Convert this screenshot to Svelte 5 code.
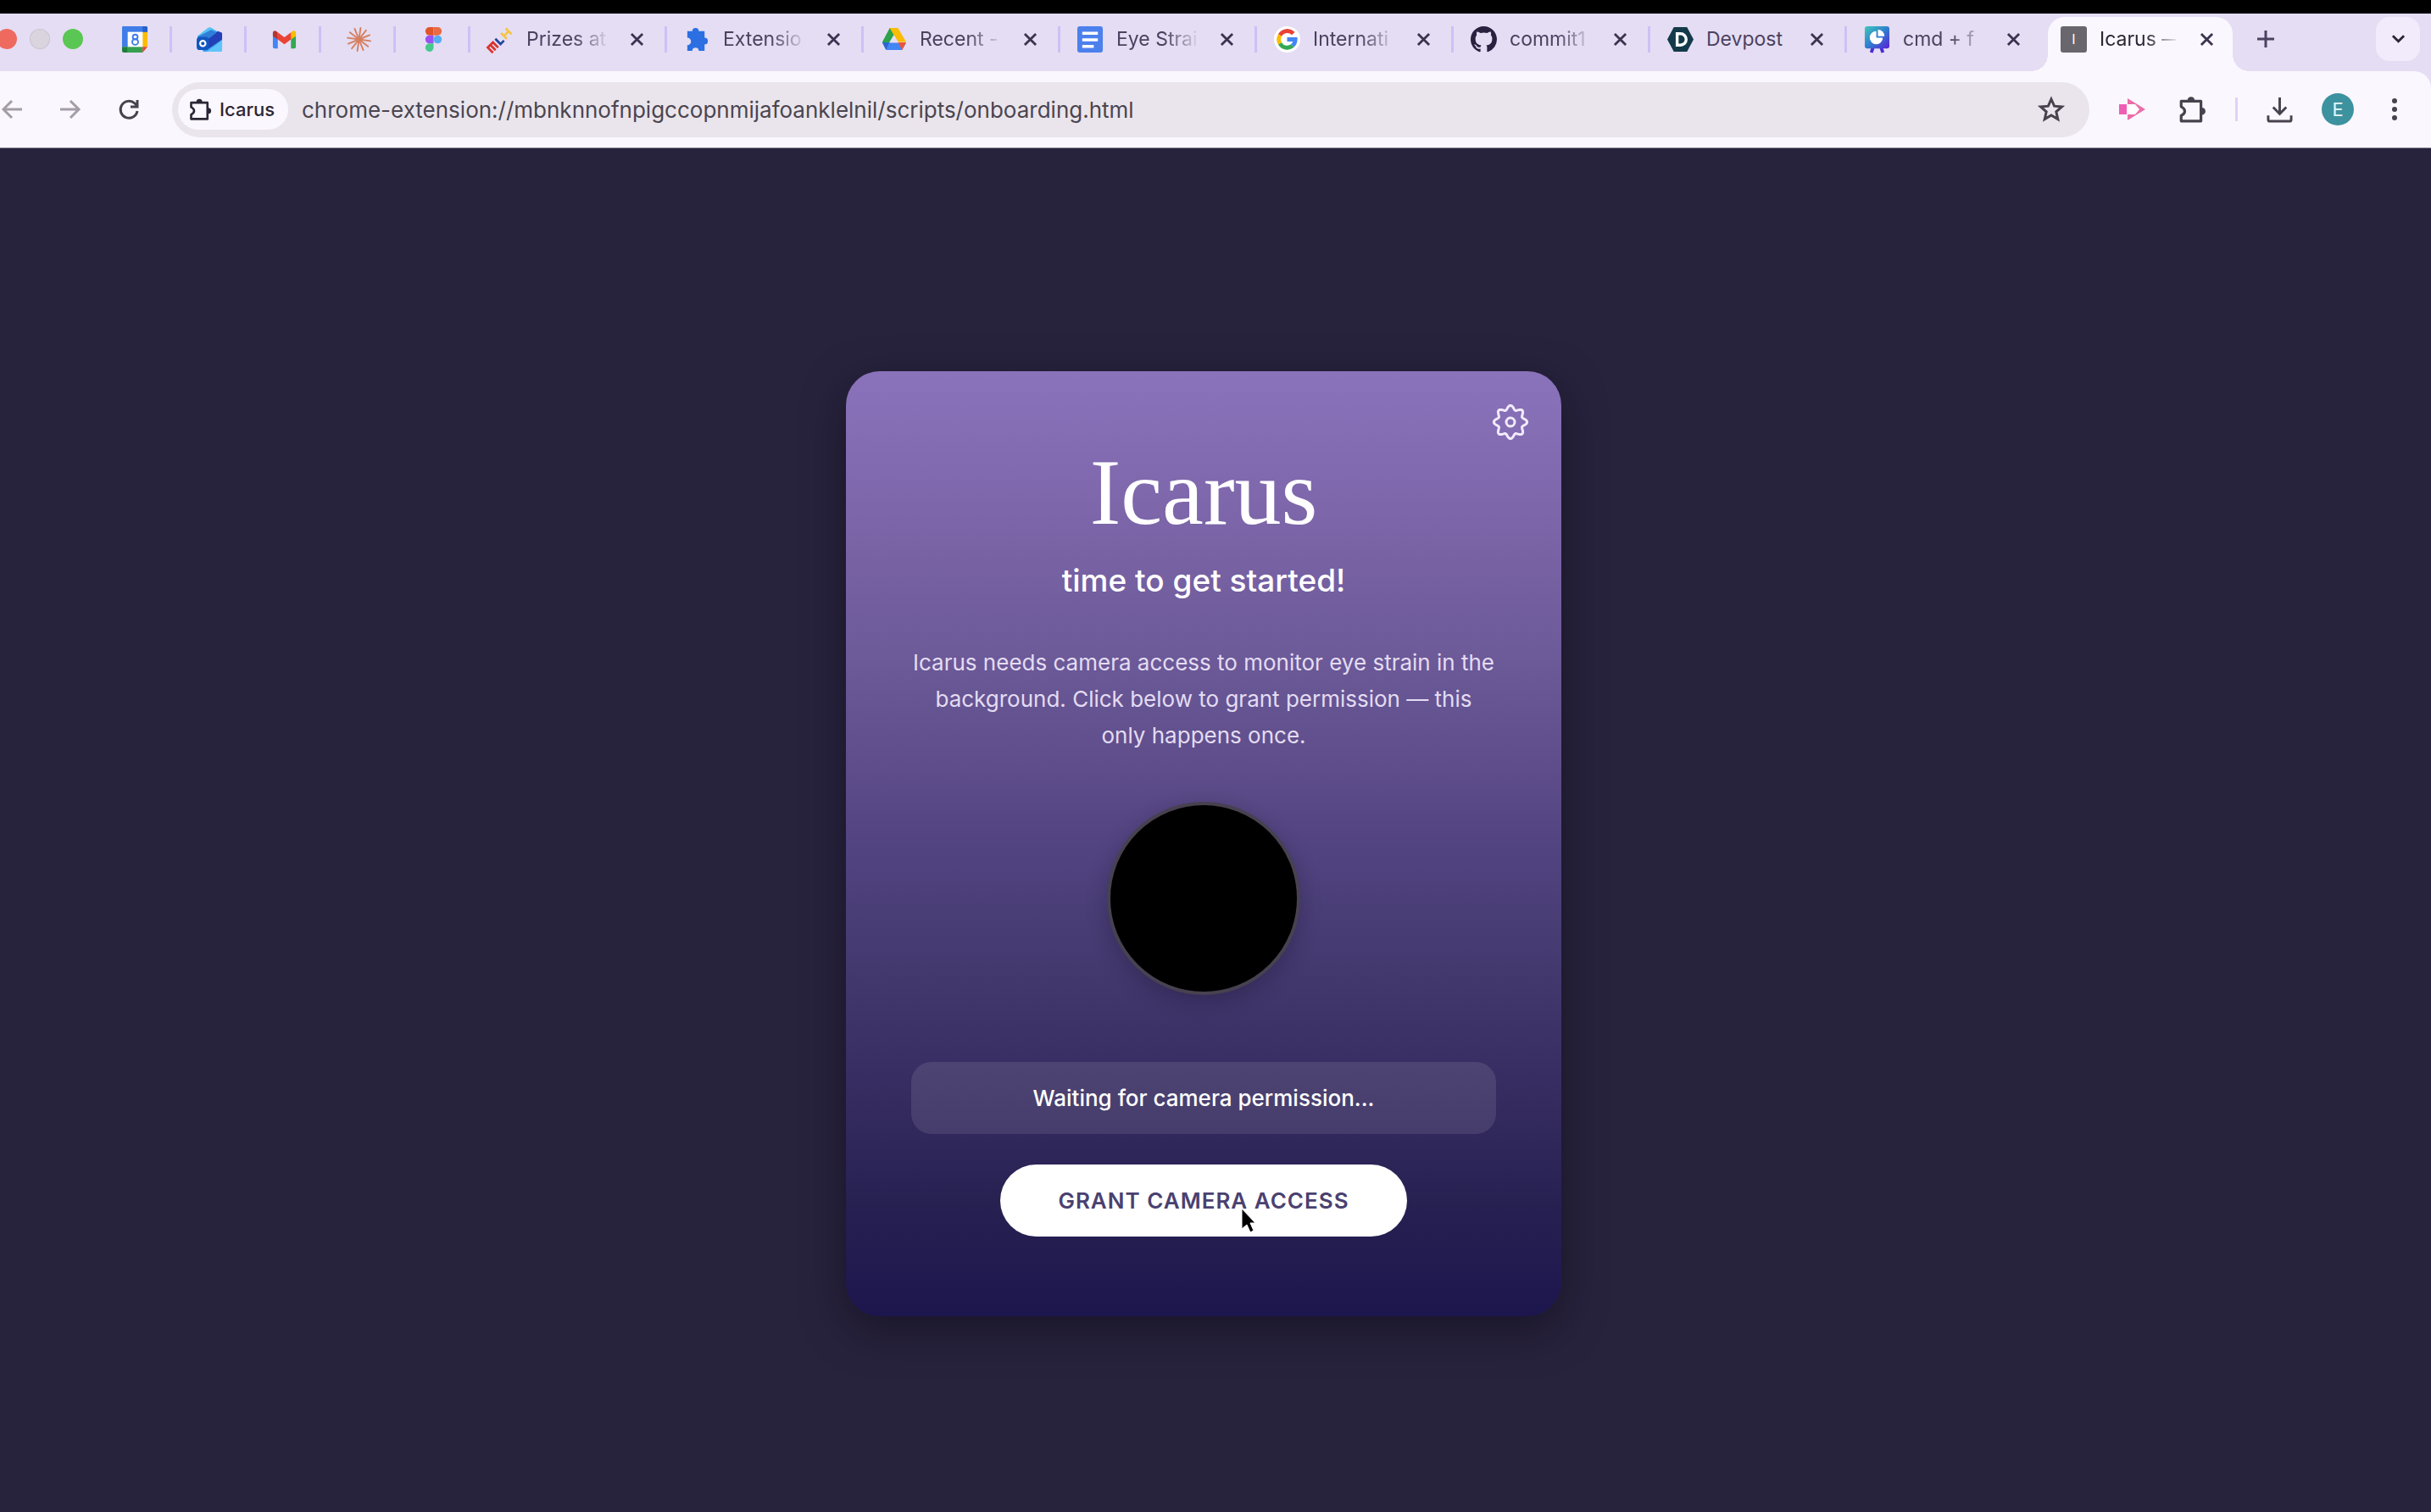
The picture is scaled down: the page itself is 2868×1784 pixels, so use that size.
<script>
  const pinned = ['calendar', 'outlook', 'gmail', 'claude', 'figma'];
  const tabs = [
    { icon: 'mlh', title: 'Prizes at', fade: true },
    { icon: 'ext', title: 'Extensio', fade: true },
    { icon: 'drive', title: 'Recent -', fade: true },
    { icon: 'docs', title: 'Eye Strai', fade: true },
    { icon: 'google', title: 'Internati', fade: true },
    { icon: 'github', title: 'commit1', fade: true },
    { icon: 'devpost', title: 'Devpost', fade: false },
    { icon: 'deck', title: 'cmd + f', fade: true }
  ];
  const rays = Array.from({ length: 12 }, (_, i) => i * 30 + 8);

  // Eight rounded lobes around a circle.
  const gearPoints = Array.from({ length: 192 }, (_, i) => {
    const t = (i / 192) * Math.PI * 2;
    const r = 17.2 + 2.4 * Math.cos(8 * t);
    return `${(21 + r * Math.cos(t)).toFixed(2)},${(21 + r * Math.sin(t)).toFixed(2)}`;
  }).join(' ');
</script>

{#snippet favicon(name)}
  <svg class="fav" viewBox="0 0 32 32" aria-hidden="true">
    {#if name === 'calendar'}
      <path d="M3 0h26a2 2 0 0 1 2 2v5H7v18H0V2a2 2 0 0 1 3-2z" fill="#3f7de8" />
      <path d="M25 7h6v18h-6z" fill="#fbbc04" />
      <path d="M25 0h4a2 2 0 0 1 2 2v5h-6z" fill="#2a5fcb" />
      <path d="M7 25h18v7H7z" fill="#34a04f" />
      <path d="M0 25h7v7H2a2 2 0 0 1-2-2z" fill="#1e7e3c" />
      <path d="M25 25h6l-6 7z" fill="#ea4335" />
      <path d="M7 7h18v18H7z" fill="#fff" />
      <circle cx="16" cy="13" r="3" fill="none" stroke="#3f7de8" stroke-width="2" />
      <circle cx="16" cy="19" r="3.6" fill="none" stroke="#3f7de8" stroke-width="2" />
    {:else if name === 'outlook'}
      <path d="M1 12 14 2q2-1 4 0l13 8v18a3 3 0 0 1-3 3H8z" fill="#3aa0ee" />
      <path d="M1 12 14 2q2-1 4 0l4 3L6 16z" fill="#55c3f5" />
      <path d="M31 8v8L12 29l-4-11L26 6z" fill="#2340b8" />
      <path d="M1 13 18 4l6 4L8 20z" fill="#2f7fd8" />
      <path d="M12 31 31 17v11a3 3 0 0 1-3 3z" fill="#5fc4fb" />
      <rect x="0" y="13" width="15" height="16" rx="4" fill="#1257c0" />
      <circle cx="7.500" cy="21" r="3.300" fill="none" stroke="#fff" stroke-width="2.200" />
    {:else if name === 'gmail'}
      <path d="M2 8v17a2 2 0 0 0 2 2h4V13z" fill="#4285f4" />
      <path d="M30 8v17a2 2 0 0 1-2 2h-4V13z" fill="#34a853" />
      <path d="M24 7.500 26 6c2-1.500 4 0 4 2v4l-6 4z" fill="#fbbc04" />
      <path d="M8 7.500 6 6C4 4.500 2 6 2 8v4l6 4z" fill="#b8352b" />
      <path d="M8 7.500 16 13.500 24 7.500V16l-8 6-8-6z" fill="#ea4335" />
    {:else if name === 'claude'}
      {#each rays as a}
        <path d="M16 16V2" stroke="#d5805f" stroke-width="2" stroke-linecap="round" transform="rotate({a} 16 16)" />
      {/each}
    {:else if name === 'figma'}
      <path d="M11 1h5v10h-5a5 5 0 0 1 0-10z" fill="#e0542a" />
      <path d="M16 1h5a5 5 0 0 1 0 10h-5z" fill="#e96a45" />
      <path d="M11 11h5v10h-5a5 5 0 0 1 0-10z" fill="#9a52f4" />
      <circle cx="21" cy="16" r="5" fill="#55aef0" />
      <path d="M11 21h5v5a5 5 0 1 1-5-5z" fill="#45c98c" />
    {:else if name === 'mlh'}
      <g fill="none" stroke-width="2.800" transform="rotate(-45 16 16)">
        <path d="M-2 21v-9h9v9M2.500 12v9" stroke="#d8342c" />
        <path d="M12 11v9h6" stroke="#24439c" />
        <path d="M22 11v10M30 11v10M22 16h8" stroke="#f5c542" />
      </g>
    {:else if name === 'ext'}
      <path d="M3 7h6a4 4 0 1 1 8 0h7v8a4 4 0 1 1 0 8v8h-7a4 4 0 0 0-8 0H3v-7a4 4 0 0 0 0-9z" fill="#2b6fe3" transform="translate(1 -1)" />
    {:else if name === 'drive'}
      <path d="M11 2h10L7 27 2 19z" fill="#2ba24c" />
      <path d="M11 2h10l10 17H21z" fill="#fbbc04" />
      <path d="M7 20h24l-5 9H7l-5-9z" fill="#4285f4" />
      <path d="M21 19.500h10L26 29z" fill="#ea5540" />
      <path d="M16 10.500 21.500 19.500h-11z" fill="#e6def4" />
      <path d="M2 19.500h8.500L6.500 29z" fill="#2d64d2" />
    {:else if name === 'docs'}
      <rect width="31" height="32" rx="3" fill="#4c80ec" />
      <path d="M6 8.500h19M6 16.500h19M6 24.500h14" stroke="#fff" stroke-width="3.500" />
    {:else if name === 'google'}
      <circle cx="16" cy="16" r="16" fill="#fff" />
      <g fill="none" stroke-width="5">
        <path d="M23.500 9A10 10 0 0 0 7.300 11" stroke="#ea4335" />
        <path d="M7.300 11a10 10 0 0 0 0 10" stroke="#fbbc04" />
        <path d="M7.300 21a10 10 0 0 0 15.200 2.600" stroke="#34a853" />
        <path d="M22.500 23.600A10 10 0 0 0 26 16H16" stroke="#4285f4" />
      </g>
    {:else if name === 'github'}
      <path transform="scale(2)" fill="#2a2140" d="M8 0C3.580 0 0 3.580 0 8c0 3.540 2.290 6.530 5.470 7.590.4.070.55-.17.55-.38 0-.19-.01-.82-.01-1.490-2.010.37-2.530-.49-2.690-.94-.09-.23-.48-.94-.82-1.130-.28-.15-.68-.52-.01-.53.63-.01 1.080.58 1.230.82.72 1.210 1.870.87 2.330.66.07-.52.28-.87.51-1.070-1.780-.2-3.640-.89-3.640-3.950 0-.87.31-1.590.82-2.150-.08-.2-.36-1.020.08-2.120 0 0 .67-.21 2.200.82.64-.18 1.320-.27 2-.27s1.360.09 2 .27c1.530-1.040 2.200-.82 2.200-.82.44 1.100.16 1.920.08 2.120.51.56.82 1.270.82 2.150 0 3.070-1.870 3.750-3.650 3.950.29.25.54.73.54 1.480 0 1.070-.01 1.930-.01 2.200 0 .21.15.46.55.38A8.010 8.010 0 0 0 16 8c0-4.420-3.580-8-8-8z" />
    {:else if name === 'devpost'}
      <path d="M8 1h16l8 15-8 15H8L0 16z" fill="#143a4a" />
      <path d="M12 9h4a7 7 0 0 1 0 14h-4z" fill="none" stroke="#fff" stroke-width="3.500" />
    {:else if name === 'deck'}
      <defs>
        <linearGradient id="deck-fill" x1="0" y1="0" x2="1" y2="1">
          <stop offset="0" stop-color="#3fc9b8" />
          <stop offset="0.500" stop-color="#2f7fd0" />
          <stop offset="1" stop-color="#5b1fd6" />
        </linearGradient>
      </defs>
      <path d="M11 26 9 32M21 26l2 6" stroke="#4a2bd6" stroke-width="4" />
      <path d="M4 0h24a3 3 0 0 1 3 3v21a3 3 0 0 1-3 3H4a3 3 0 0 1-3-3V3a3 3 0 0 1 3-3z" fill="url(#deck-fill)" />
      <path d="M15 6v8h8a8 8 0 1 1-8-8z" fill="#fff" />
      <path d="M17 4a8 8 0 0 1 8 8h-8z" fill="#fff" />
    {/if}
  </svg>
{/snippet}

{#snippet cross()}
  <svg class="x" viewBox="0 0 16 16" aria-hidden="true"><path d="M1 1l14 14M15 1 1 15" /></svg>
{/snippet}

{#snippet puzzle()}
  <svg class="puzzle" viewBox="0 0 32 32" aria-hidden="true">
    <path d="M4 7h22v22H4v-6q4-2 4-5t-4-5z" fill="none" stroke="currentColor" stroke-width="3" stroke-linejoin="round" />
    <path d="M11 6a4 4 0 0 1 8 0zM27 14a4 4 0 0 1 0 8z" fill="currentColor" />
  </svg>
{/snippet}

<div class="window">
  <header>
    <div class="strip">
      <div class="lights">
        <button class="light red" aria-label="Close window"></button>
        <button class="light grey" aria-label="Minimise window"></button>
        <button class="light green" aria-label="Zoom window"></button>
      </div>
      <nav class="tabs" aria-label="Tabs">
        {#each pinned as name}
          <button class="pin" aria-label={name}>{@render favicon(name)}</button>
        {/each}
        {#each tabs as tab, i}
          <div class="tab" class:last={i === tabs.length - 1}>
            {@render favicon(tab.icon)}
            <span class="title" class:fade={tab.fade}>{tab.title}</span>
            <button class="close" aria-label="Close tab">{@render cross()}</button>
          </div>
        {/each}
        <div class="tab active">
          <span class="letter">I</span>
          <span class="title fade">Icarus —</span>
          <button class="close" aria-label="Close tab">{@render cross()}</button>
        </div>
      </nav>
      <button class="plus" aria-label="New tab">
        <svg viewBox="0 0 20 20"><path d="M10 0v20M0 10h20" /></svg>
      </button>
      <button class="search" aria-label="Search tabs">
        <svg viewBox="0 0 16 10"><path d="M1 1l7 7 7-7" /></svg>
      </button>
    </div>

    <div class="toolbar">
      <button class="nav" aria-label="Back">
        <svg viewBox="0 0 24 24"><path d="M24 12H2M12 2 2 12l10 10" /></svg>
      </button>
      <button class="nav" aria-label="Forward">
        <svg viewBox="0 0 24 24"><path d="M0 12h22M12 2l10 10-10 10" /></svg>
      </button>
      <button class="nav dark" aria-label="Reload">
        <svg viewBox="0 0 24 24"><path d="M22 14a10 10 0 1 1-3-9l3 3M22 1v8h-8" /></svg>
      </button>
      <div class="omnibox">
        <button class="chip">{@render puzzle()}<span>Icarus</span></button>
        <input
          class="url"
          type="text"
          aria-label="Address"
          value="chrome-extension://mbnknnofnpigccopnmijafoanklelnil/scripts/onboarding.html"
        />
        <button class="star" aria-label="Bookmark">
          <svg viewBox="0 0 30 30"><path d="M15 3l3.600 8.200 8.900.8-6.700 5.900 2 8.700L15 22l-7.800 4.600 2-8.700L2.500 12l8.900-.8z" /></svg>
        </button>
      </div>
      <div class="actions">
        <button class="recorder" aria-label="Screen recorder">
          <svg class="rec" viewBox="0 0 32 32">
            <path d="M11 3 32 16 11 29z" fill="#ea6fa8" />
            <path d="M1 10h9v12H1z" fill="#ee5fb4" />
            <path d="M11 10h9l5 6-5 6h-9z" fill="#fff" />
          </svg>
        </button>
        <button aria-label="Extensions">{@render puzzle()}</button>
        <span class="rule"></span>
        <button aria-label="Downloads">
          <svg class="down" viewBox="0 0 32 32"><path d="M16 1v20M8 13l8 8 8-8M2 23v5a2 2 0 0 0 2 2h24a2 2 0 0 0 2-2v-5" /></svg>
        </button>
        <button class="avatar" aria-label="Profile">E</button>
        <button class="menu" aria-label="Menu">
          <svg class="dots" viewBox="0 0 8 28"><circle cx="4" cy="4" r="3" /><circle cx="4" cy="14" r="3" /><circle cx="4" cy="24" r="3" /></svg>
        </button>
      </div>
    </div>
  </header>

  <main>
    <section class="card">
      <button class="gear" aria-label="Settings">
        <svg viewBox="0 0 42 42">
          <polygon points={gearPoints} />
          <circle cx="21" cy="21" r="5" />
        </svg>
      </button>
      <h1>Icarus</h1>
      <h2>time to get started!</h2>
      <p class="copy">
        Icarus needs camera access to monitor eye strain in the background. Click below to grant permission — this only
        happens once.
      </p>
      <div class="preview"></div>
      <p class="status" role="status">Waiting for camera permission...</p>
      <button class="grant">
        GRANT CAMERA ACCESS
        <svg class="cursor" viewBox="0 0 18 30" aria-hidden="true">
          <path d="M1 1v24l6-5 4 9 4-2-4-9h6z" fill="#000" stroke="#fff" />
        </svg>
      </button>
    </section>
  </main>
</div>

<style>
  :global(body) {
    margin: 0;
    background: #28233d;
  }
  .window {
    min-height: 100vh;
    display: flex;
    flex-direction: column;
    overflow: hidden;
    font-family: Inter, 'Liberation Sans', sans-serif;
    background: #28233d;
  }
  button {
    border: 0;
    padding: 0;
    margin: 0;
    background: none;
    font: inherit;
    color: inherit;
    display: flex;
    align-items: center;
    justify-content: center;
    flex: none;
  }
  svg {
    display: block;
    overflow: visible;
  }
  header {
    border-top: 16px solid #000;
    background: #e5ddf3;
  }
  .strip {
    display: flex;
    height: 68px;
  }
  .lights {
    display: flex;
    align-items: center;
    gap: 15px;
    padding-bottom: 8px;
    margin-left: -4px;
    width: 119px;
    flex: none;
  }
  .light {
    width: 24px;
    height: 24px;
    border-radius: 50%;
  }
  .red {
    background: #ee6a5f;
  }
  .grey {
    background: #d9d4de;
    box-shadow: inset 0 0 0 1px #cbc5d2;
  }
  .green {
    background: #5ac653;
  }
  .tabs {
    display: flex;
  }
  .pin,
  .tab {
    box-sizing: border-box;
    display: flex;
    align-items: center;
    padding-bottom: 8px;
    background: linear-gradient(#cdc0f6, #cdc0f6) right 0 top 15px / 3px 31px no-repeat;
  }
  .pin {
    width: 88px;
  }
  .fav {
    width: 31px;
    height: 31px;
    flex: none;
  }
  .tab {
    width: 232px;
    padding-left: 20px;
    padding-right: 24px;
    color: #4b4260;
  }
  .last {
    background: none;
  }
  .title {
    flex: 1;
    min-width: 0;
    margin-left: 15px;
    white-space: nowrap;
    font-size: 23px;
    line-height: 32px;
  }
  .fade {
    mask-image: linear-gradient(to right, #000 60%, transparent 105%);
  }
  .close {
    width: 24px;
    height: 24px;
    margin-left: 24px;
  }
  .x {
    width: 15px;
    height: 15px;
    fill: none;
    stroke: #3c3350;
    stroke-width: 3;
  }
  .active {
    position: relative;
    width: 218px;
    height: 64px;
    margin-top: 4px;
    margin-left: 5px;
    padding: 0 19px 12px 15px;
    border-radius: 20px 20px 0 0;
    background: #fbf7fe;
    color: #2b2635;
  }
  .active::before,
  .active::after {
    content: '';
    position: absolute;
    bottom: 0;
    width: 20px;
    height: 20px;
  }
  .active::before {
    right: 100%;
    background: radial-gradient(circle at 0 0, transparent 20px, #fbf7fe 20px);
  }
  .active::after {
    left: 100%;
    background: radial-gradient(circle at 100% 0, transparent 20px, #fbf7fe 20px);
  }
  .letter {
    width: 31px;
    height: 31px;
    border-radius: 3px;
    background: #6a666d;
    color: #fff;
    font-size: 16px;
    line-height: 31px;
    text-align: center;
    flex: none;
  }
  .plus {
    width: 78px;
    padding-bottom: 8px;
  }
  .plus svg {
    width: 20px;
    height: 20px;
    fill: none;
    stroke: #4b4260;
    stroke-width: 3;
  }
  .search {
    width: 52px;
    height: 52px;
    margin: 4px 13px 0 auto;
    border-radius: 16px;
    background: #f2ebfb;
  }
  .search svg {
    width: 15px;
    height: 10px;
    fill: none;
    stroke: #2b2635;
    stroke-width: 3;
  }
  .toolbar {
    display: flex;
    align-items: center;
    height: 90px;
    border-bottom: 1px solid #8f8a9c;
    border-radius: 0 20px 0 0;
    background: #fbf7fe;
  }
  .nav {
    width: 69px;
    height: 48px;
    color: #a39da8;
  }
  .nav:first-child {
    margin-left: -21px;
  }
  .nav svg {
    width: 24px;
    height: 24px;
    fill: none;
    stroke: currentColor;
    stroke-width: 3;
  }
  .dark {
    color: #47424d;
  }
  .omnibox {
    flex: 1;
    display: flex;
    align-items: center;
    height: 65px;
    margin-left: 17px;
    padding: 0 30px 0 7px;
    box-sizing: border-box;
    border-radius: 33px;
    background: #eae5ec;
  }
  .chip {
    gap: 9px;
    height: 48px;
    padding: 0 16px 0 12px;
    border-radius: 24px;
    background: #fbf7fe;
    color: #2b2635;
    font-size: 22px;
    font-weight: 500;
  }
  .puzzle {
    width: 28px;
    height: 28px;
  }
  .url {
    flex: 1;
    min-width: 0;
    border: 0;
    padding: 0;
    margin-left: 16px;
    background: none;
    font: inherit;
    font-size: 26px;
    color: #4a4550;
    outline: none;
  }
  .star svg {
    width: 30px;
    height: 30px;
    fill: none;
    stroke: #47424d;
    stroke-width: 3;
  }
  .actions {
    display: flex;
    align-items: center;
    color: #47424d;
    padding: 0 39px 0 34px;
    gap: 34px;
  }
  .recorder {
    margin-right: 4px;
  }
  .menu {
    margin-left: 10px;
  }
  .rec {
    width: 32px;
    height: 32px;
  }
  .actions .puzzle {
    width: 34px;
    height: 34px;
  }
  .rule {
    width: 3px;
    height: 28px;
    background: #ddd3f5;
  }
  .down {
    width: 31px;
    height: 31px;
    fill: none;
    stroke: currentColor;
    stroke-width: 3;
  }
  .avatar {
    width: 38px;
    height: 38px;
    border-radius: 50%;
    background: #3d929f;
    color: #e6f6f8;
    font-size: 22px;
  }
  .dots {
    width: 8px;
    height: 28px;
    fill: currentColor;
  }
  main {
    flex: 1;
    display: flex;
    align-items: center;
    justify-content: center;
    padding: 32px 28px 0 0;
  }
  .card {
    position: relative;
    box-sizing: border-box;
    width: 844px;
    display: flex;
    flex-direction: column;
    align-items: center;
    padding: 76px 77px 94px;
    border-radius: 40px;
    background: linear-gradient(
      #8a73bb,
      #7b64a7 17%,
      #6c5a99 30%,
      #5e4d8a 42%,
      #524481 50%,
      #44396f 63%,
      #382d62 75%,
      #272152 88%,
      #1c164e
    );
    box-shadow: 0 16px 50px rgba(10, 8, 20, 0.5);
    color: #fff;
    text-align: center;
  }
  .gear {
    position: absolute;
    top: 39px;
    right: 39px;
  }
  .gear svg {
    width: 42px;
    height: 42px;
    fill: none;
    stroke: #f1eafb;
    stroke-width: 3;
    stroke-linejoin: round;
  }
  h1,
  h2,
  p {
    margin: 0;
  }
  h1 {
    font: 400 110px/134px 'Liberation Serif', serif;
  }
  h2 {
    margin-top: 12px;
    font-size: 37px;
    line-height: 50px;
    font-weight: 500;
  }
  .copy {
    margin-top: 50px;
    font-size: 26px;
    line-height: 43px;
    color: #e4dcf2;
  }
  .preview {
    box-sizing: border-box;
    width: 228px;
    height: 228px;
    margin-top: 57px;
    border: 4px solid #474150;
    border-radius: 50%;
    background: #000;
    box-shadow: 0 8px 24px rgba(20, 12, 40, 0.3);
  }
  .status {
    align-self: stretch;
    margin-top: 79px;
    padding: 22px;
    border-radius: 24px;
    background: rgba(255, 255, 255, 0.1);
    font-size: 26px;
    line-height: 41px;
    font-weight: 500;
  }
  .grant {
    position: relative;
    width: 480px;
    height: 85px;
    margin-top: 36px;
    border-radius: 43px;
    background: #fff;
    color: #4a4170;
    font-size: 26px;
    font-weight: 600;
    letter-spacing: 1px;
  }
  .cursor {
    position: absolute;
    left: 284px;
    top: 51px;
    width: 18px;
    height: 30px;
  }
</style>
